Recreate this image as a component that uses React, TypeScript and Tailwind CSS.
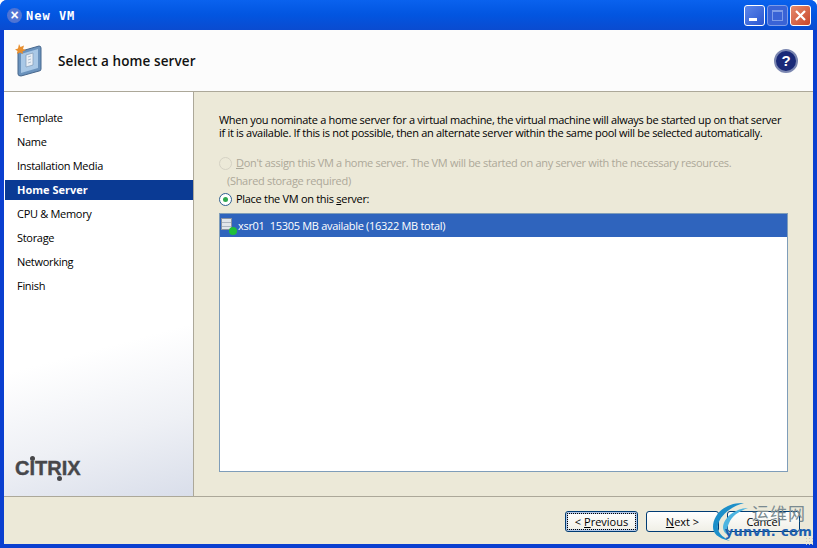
import React from 'react';

const font = "font-['Open_Sans','Noto_Sans',sans-serif]";

const steps = ['Template', 'Name', 'Installation Media', 'Home Server', 'CPU & Memory', 'Storage', 'Networking', 'Finish'];

const Radio: React.FC<{ checked?: boolean; disabled?: boolean }> = ({ checked, disabled }) => (
  <span className={`flex h-[13px] w-[13px] shrink-0 items-center justify-center rounded-full border ${disabled ? 'border-[#d5d2c4] bg-[#ece9d8]' : 'border-[#2f5f8f] bg-white'}`}>
    {checked && <span className="h-[5px] w-[5px] rounded-full bg-[#2fa84f]" />}
  </span>
);

const WizardIcon = () => (
  <svg width="28" height="33" viewBox="0 0 28 33">
    <path d="M3 8 L24 2 Q26 2 26 4 L26 25 Q26 27 24 27 L6 32 Q3 32 3 30 Z" fill="#6b93bd" stroke="#47678c" />
    <path d="M6 10 L23 5 L23 24 L6 29 Z" fill="#a9c8e6" />
    <path d="M11 11 L18 9 L18 21 L11 23 Z" fill="#e8eef5" stroke="#7f99b5" strokeWidth="0.7" />
    <path d="M13 13 L16 12 M13 16 L16 15 M13 19 L16 18" stroke="#9fb2c6" strokeWidth="0.8" />
    <path d="M4 0 L5.5 3 L9 1.5 L8 5 L11 6 L7.5 7.5 L8 10 L5 8.5 L2 10 L2.5 7 L0 5.5 L3 4.5 Z" fill="#e98f2e" />
  </svg>
);

const CitrixLogo = () => (
  <div className="relative flex h-[17px] w-[68px] items-center">
    <span className="font-['Liberation_Sans',sans-serif] text-[20px] font-bold leading-none tracking-[0px] text-[#47474a] [-webkit-text-stroke:0.4px_#47474a]">CITRIX</span>
    <span className="absolute left-[15px] top-[-3px] h-[5px] w-[5px] rounded-full bg-[#47474a]" />
    <span className="absolute left-[42px] bottom-[-5px] h-[5px] w-[5px] rounded-full bg-[#47474a]" />
  </div>
);

const Watermark = () => (
  <div className="absolute left-[712px] top-[500px] h-[48px] w-[105px]">
    <svg className="absolute left-0 top-0" width="50" height="48" viewBox="0 0 50 48">
      <path d="M32 3 C14 2 1 14 1 27 C1 33 5 38 18 41 C8 36 5 31 6 25 C8 15 20 6 32 3 Z" fill="#1c8fc9" />
      <path d="M36 8 C24 8 12 17 11 27 C11 31 13 34 18 36 C14 31 15 27 18 21 C22 14 30 10 36 8 Z" fill="#4db4e0" />
    </svg>
    <span className="absolute left-[40px] top-[3px] font-['Noto_Sans_CJK_SC',sans-serif] text-[17px] leading-[20px] tracking-[1px] text-[#7a8a90]">运维网</span>
    <span className="absolute right-[5px] top-[24px] whitespace-nowrap font-['DejaVu_Sans',sans-serif] text-[13px] font-bold leading-[16px] tracking-[0.3px] text-[#1c5fb0]">yunvn. com</span>
    <span className="absolute bottom-[3px] right-[2px] h-[8px] w-[10px] bg-[radial-gradient(#c9c9c0_1px,transparent_1px)] bg-[length:3px_3px]" />
  </div>
);

const Button: React.FC<{ focused?: boolean; children: React.ReactNode }> = ({ focused, children }) => (
  <button className={`flex h-[21px] w-[73px] items-center justify-center rounded-[3px] border border-[#003c74] bg-gradient-to-b from-white to-[#f0efe6] text-[11px] leading-none text-black ${focused ? 'shadow-[inset_0_0_0_2px_#b3c8e8] outline-1 -outline-offset-3 outline-dotted outline-black' : ''}`}>
    {children}
  </button>
);

export default function App() {
  return (
    <div className={`relative flex h-[548px] w-[817px] flex-col overflow-hidden rounded-t-[7px] bg-[#0a3fd0] ${font} text-[11px] tracking-[-0.3px] text-black`}>
      {/* Title bar */}
      <div className="flex h-[30px] shrink-0 items-center bg-gradient-to-b from-[#0a62ee] via-[#0255e0] to-[#0a4bd0] pl-[7px] pr-[6px]">
        <span className="flex h-[15px] w-[15px] items-center justify-center rounded-full bg-[#4f74d4] font-['Liberation_Sans',sans-serif] text-[14px] font-bold leading-none tracking-normal text-white">×</span>
        <span className="ml-[4px] pt-[2px] font-['DejaVu_Sans_Mono',monospace] text-[12px] font-bold tracking-[1px] text-white">New VM</span>
        <div className="ml-auto flex gap-[2px]">
          <div className="flex h-[21px] w-[21px] items-end rounded-[3px] border border-white bg-gradient-to-br from-[#5c86ea] to-[#2a55d0] pb-[4px] pl-[4px]">
            <span className="h-[3px] w-[8px] bg-white" />
          </div>
          <div className="flex h-[21px] w-[21px] items-center justify-center rounded-[3px] border border-[#7e9ce8] bg-[#3a63d6]">
            <span className="h-[11px] w-[11px] border border-t-2 border-[#7e9ce8]" />
          </div>
          <div className="flex h-[21px] w-[21px] items-center justify-center rounded-[3px] border border-white bg-gradient-to-br from-[#e58a6c] to-[#c8452a]">
            <svg width="13" height="13" viewBox="0 0 13 13"><path d="M2 2 L11 11 M11 2 L2 11" stroke="#fff" strokeWidth="2.2" /></svg>
          </div>
        </div>
      </div>

      <div className="mx-[4px] mb-[4px] flex min-h-0 flex-1 flex-col bg-[#ece9d8]">
        {/* Header */}
        <div className="flex h-[62px] shrink-0 items-center border-b border-[#aca899] bg-[#fcfcfc] pl-[11px] pr-[15px]">
          <WizardIcon />
          <span className="ml-[15px] pt-[2px] text-[13.5px] font-semibold tracking-[0.1px] text-[#111]">Select a home server</span>
          <span className="ml-auto flex h-[24px] w-[24px] items-center justify-center rounded-full border-2 border-[#7a86b0] bg-[#1a2a78] font-['Liberation_Sans',sans-serif] text-[15px] font-bold leading-none text-white">?</span>
        </div>

        <div className="flex min-h-0 flex-1 border-b border-[#aca899]">
          {/* Sidebar */}
          <div className="flex w-[190px] shrink-0 flex-col justify-between border-r border-[#aca899] bg-[linear-gradient(165deg,#ffffff_0%,#ffffff_62%,#eef0f5_82%,#d9deea_100%)] pb-[20px] pt-[14px]">
            <div className="flex flex-col">
              {steps.map(step => (
                <div key={step} className="flex h-[24px] items-center">
                  {step === 'Home Server' ? (
                    <div className="ml-[1px] flex h-[20px] flex-1 items-center bg-[#0a3a94] pl-[12px] font-bold tracking-[0px] text-white">{step}</div>
                  ) : (
                    <span className="pl-[13px]">{step}</span>
                  )}
                </div>
              ))}
            </div>
            <div className="pl-[11px]">
              <CitrixLogo />
            </div>
          </div>

          {/* Main */}
          <div className="flex min-w-0 flex-1 flex-col pb-[24px] pl-[25px] pr-[25px] pt-[21px]">
            <p className="whitespace-nowrap leading-[13px]">
              When you nominate a home server for a virtual machine, the virtual machine will always be started up on that server
              <br />
              if it is available. If this is not possible, then an alternate server within the same pool will be selected automatically.
            </p>
            <div className="mt-[15px] flex h-[18px] items-center gap-[4px] text-[#aca899]">
              <Radio disabled />
              <span><span className="underline">D</span>on't assign this VM a home server. The VM will be started on any server with the necessary resources.</span>
            </div>
            <div className="flex h-[18px] items-center pl-[8px] text-[#aca899]">(Shared storage required)</div>
            <div className="flex h-[18px] items-center gap-[4px]">
              <Radio checked />
              <span>Place the VM on this <span className="underline">s</span>erver:</span>
            </div>
            <div className="mt-[5px] min-h-0 flex-1 border border-[#7f9db9] bg-white">
              <div className="flex h-[23px] items-center bg-[#2f64bd] text-white">
                <span className="relative ml-[1px] h-[16px] w-[17px] shrink-0">
                  <span className="absolute left-0 top-0 h-[12px] w-[11px] border border-[#8a93a0] bg-[repeating-linear-gradient(180deg,#e3e6ea_0,#e3e6ea_3px,#aeb6c1_3px,#aeb6c1_4px)]" />
                  <span className="absolute bottom-[-1px] right-[1px] h-[8px] w-[8px] rounded-full bg-[#1fbf3a]" />
                </span>
                <span className="whitespace-pre pt-[1px]">xsr01  15305 MB available (16322 MB total)</span>
              </div>
            </div>
          </div>
        </div>

        {/* Footer */}
        <div className="flex h-[47px] shrink-0 items-start justify-end gap-[8px] pr-[13px] pt-[14px] tracking-[0px]">
          <Button focused>&lt; <span className="ml-[3px] underline">P</span>revious</Button>
          <Button><span className="underline">N</span>ext &gt;</Button>
          <Button>Cancel</Button>
        </div>
      </div>
      <Watermark />
    </div>
  );
}
